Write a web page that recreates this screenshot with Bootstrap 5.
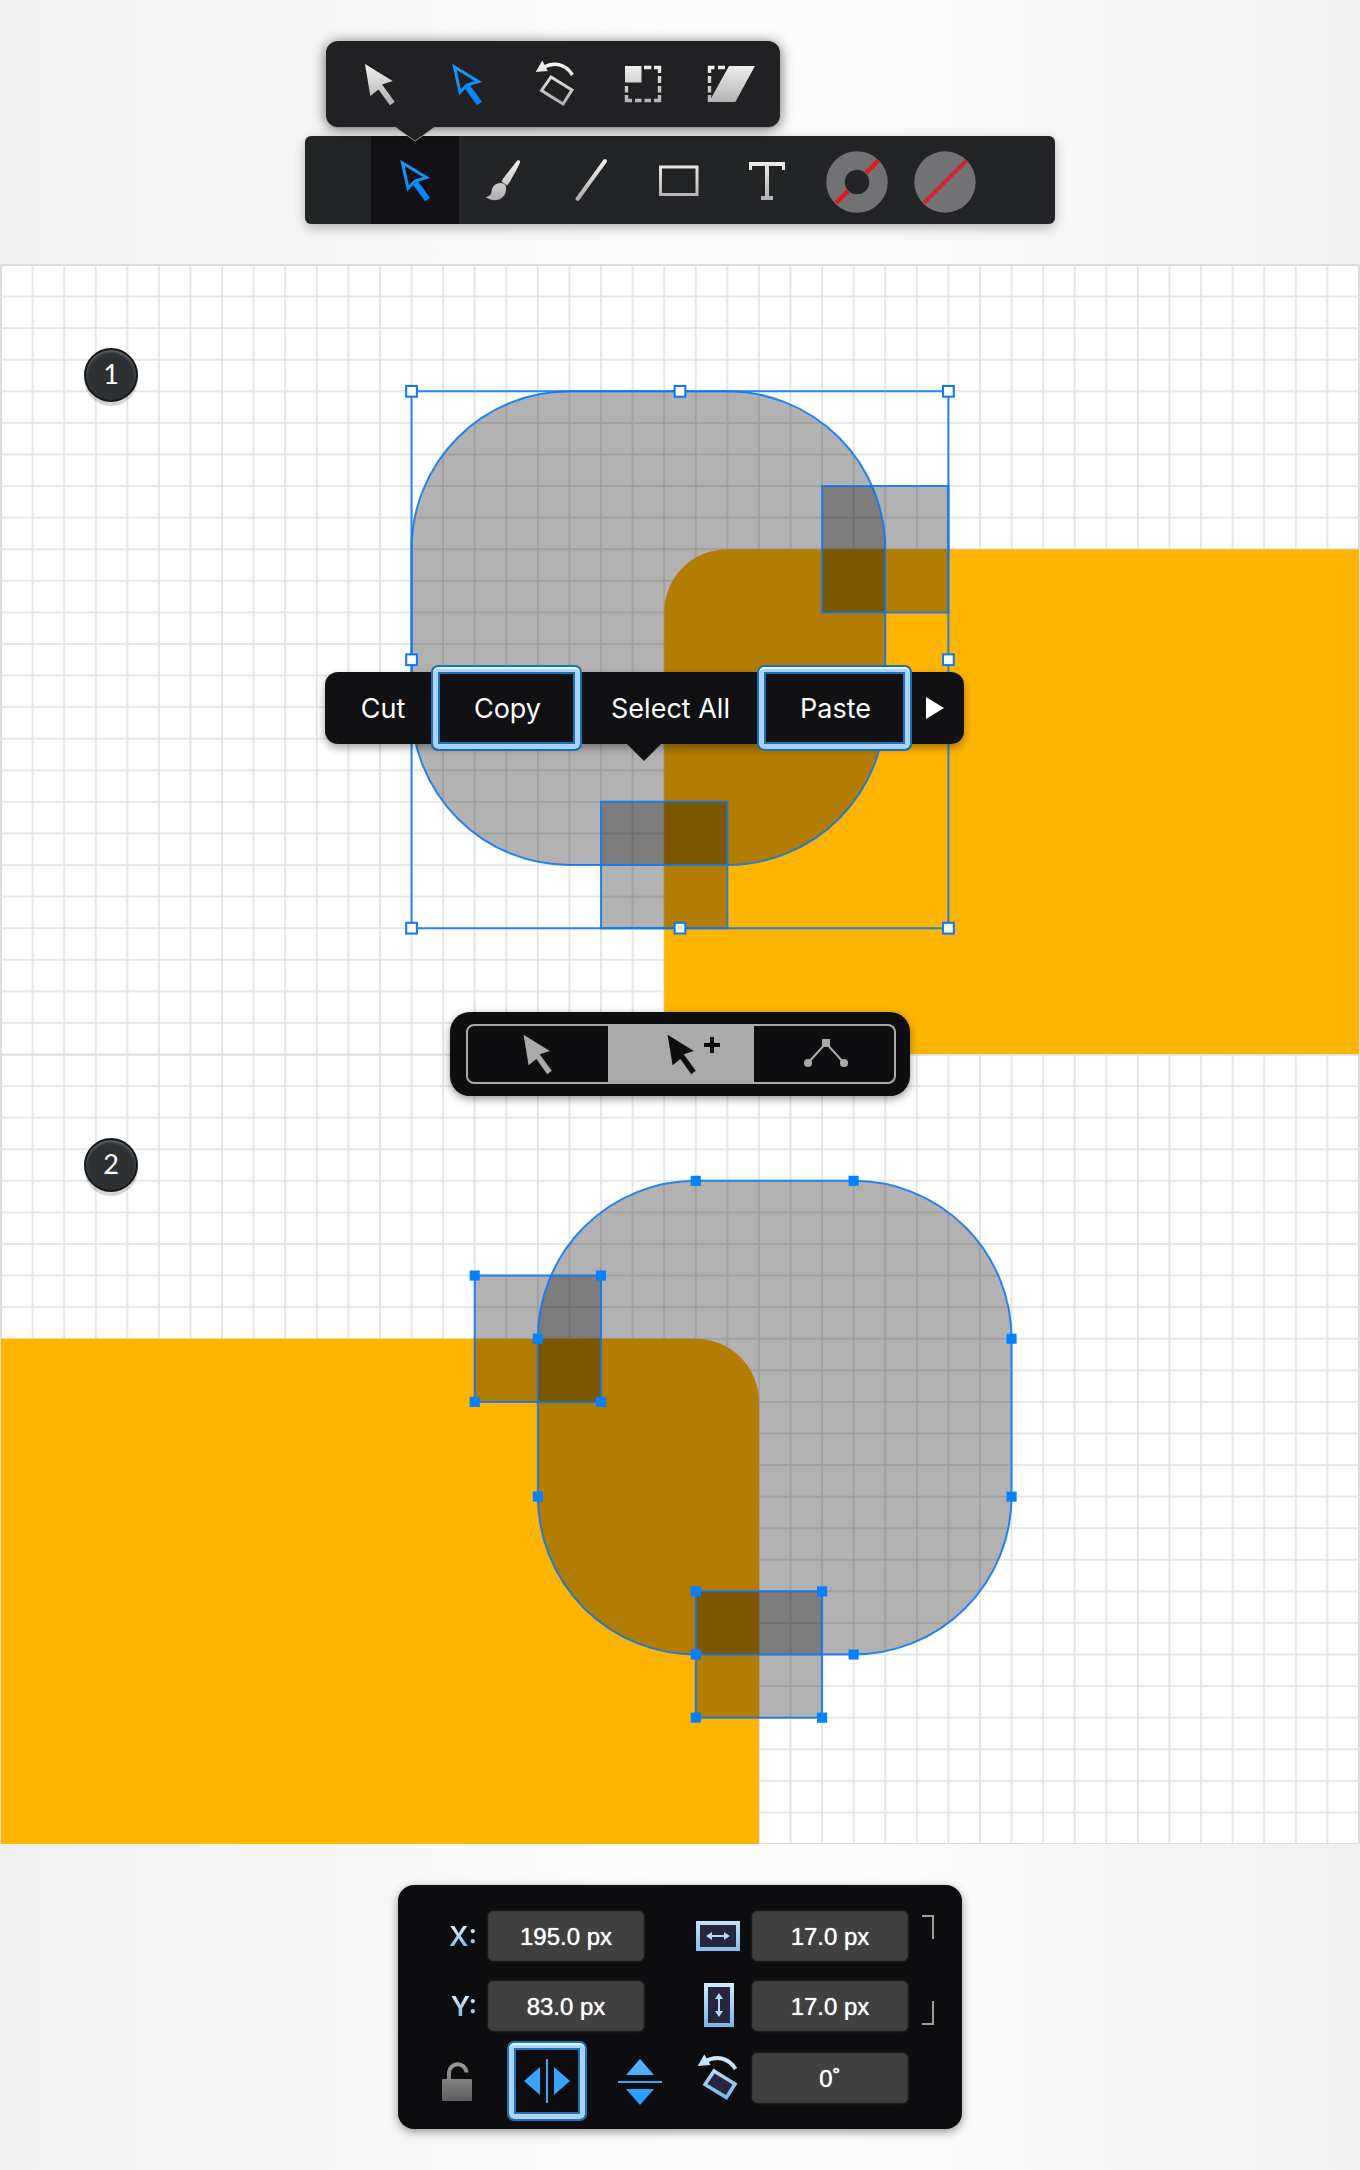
<!DOCTYPE html>
<html lang="en">
<head>
<meta charset="utf-8">
<meta name="viewport" content="width=device-width, initial-scale=1">
<title>Vector editor: copy, paste and flip</title>
<link href="https://cdn.jsdelivr.net/npm/bootstrap@5.3.0/dist/css/bootstrap.min.css" rel="stylesheet">
<style>
  body { background: linear-gradient(90deg, #f0f0f0, #fcfcfc 50%, #fcfcfc 62%, #f0f0f0); font-family: Inter, "Liberation Sans", sans-serif; }
  svg { display: block; }
  button { color: inherit; }
  .tool-zone { padding: 41px 0 40px; }
  .toolbars { width: 750px; }
  .flyout { width: 454px; margin: 0 0 9px 21px; padding-left: 10px; background: #212123; border-radius: 12px; box-shadow: 0 1px 0 #999, 0 2px 14px rgba(0,0,0,.6); z-index: 2; }
  .flyout-tip { left: 68px; top: 85px; }
  .toolbox { padding-left: 66px; background: #222426; border-radius: 6px; box-shadow: 0 4px 12px rgba(0,0,0,.28); }
  .tool { padding: 0; border: 0; background: transparent; width: 88px; height: 86px; }
  .toolbox .tool { height: 88px; }
  .toolbox .tool.active { background: #121214; }
  .artboard { background: #fff; }
  .artboard > svg { width: 100%; height: auto; }
  .edge { vector-effect: non-scaling-stroke; stroke: #0a78f5; stroke-opacity: .88; stroke-width: 2; fill: none; }
  .tint { fill: #000; fill-opacity: .3; }
  .step { left: 84px; top: 84px; width: 54px; height: 54px; background: #2e3134; color: #fff; font: 27px/48px Lato, sans-serif; text-align: center; border: 2px solid #17181a; box-shadow: inset 0 2px 3px #63666a, 0 4px 1px rgba(0,0,0,.17); }
  .edit-menu { left: 50%; top: 408px; height: 72px; width: 639px; margin-left: -355px; background: #111113; color: #fff; border-radius: 13px; box-shadow: 0 4px 9px rgba(0,0,0,.35); font-size: 27px; line-height: 36px; }
  .edit-menu button { padding: 2px 0 0 2px; border: 0; background: transparent; height: 72px; }
  .edit-menu .m-cut { width: 106px; padding-left: 10px; }
  .m-mid { width: 175px; }
  .edit-menu .m-next { width: 52px; padding: 0; }
  .menu-tip { left: 301px; top: 71px; }
  .edit-menu .m-copy { width: 151px; }
  .edit-menu .m-paste { width: 155px; }
  .edit-menu .ringed { height: 86px; }
  .ringed, .edit-menu .ringed { background: #111113; border: 2px solid #1773b4; border-radius: 7px; box-shadow: inset 0 2px 0 #e4f4ff, inset 0 0 0 5px #acd2fc, inset 0 0 0 7px #1773b4; }
  .modes { left: 50%; bottom: -42px; width: 460px; margin-left: -230px; padding: 12px 14px 12px 16px; background: #0e0e10; border-radius: 20px; box-shadow: 0 3px 8px rgba(0,0,0,.4); z-index: 3; }
  .mode-set { height: 60px; border: 2px solid #aaa; border-radius: 8px; overflow: hidden; }
  .mode-set button { padding: 0; border: 0; background: transparent; color: #aaa; width: 140px; }
  .mode-set .active { background: #aaa; color: #0e0e10; width: 146px; }
  .inspector-zone { padding: 41px 0; }
  .inspector { width: 564px; padding: 26px 28px 26px 44px; background: #0d0d0f; border-radius: 16px; box-shadow: 0 3px 10px rgba(0,0,0,.4); }
  .field-label { width: 46px; padding: 2px 11px 0 0; text-align: right; font-weight: 600; font-size: 27px; line-height: 48px; background: linear-gradient(#e0f1ff 25%, #6fb4ea 80%); -webkit-background-clip: text; background-clip: text; color: transparent; }
  .field { width: 156px; height: 50px; padding: 2px 0 0; border: 1px solid #373737; border-radius: 5px; background: #404040; color: #fff; text-align: center; font: 24px "Liberation Sans", Arial, sans-serif; text-shadow: 0 0 1px #fff; box-shadow: 0 0 3px #333; }
  .cell-icon { width: 44px; margin: 0 12px 0 52px; }
  .link-mark { margin-left: 14px; }
  .next-row { margin-top: 20px; }
  .last-row { margin-top: 22px; }
  .flip-set { width: 246px; height: 80px; margin: -12px 0 -18px; }
  .flip-set button { padding: 0; border: 0; background: transparent; }
  .flip-set .ringed { width: 80px; height: 80px; margin: 0 31px 0 35px; border: 2px solid #1773b4; background: #0d0d0f; }
  .flip-set + .cell-icon { margin-left: 8px; }
</style>
<script src="https://cdn.jsdelivr.net/npm/bootstrap@5.3.0/dist/js/bootstrap.bundle.min.js"></script>
</head>
<body>
<svg width="0" height="0" class="position-absolute" aria-hidden="true">
  <defs>
    <linearGradient id="silver" gradientUnits="userSpaceOnUse" x1="0" y1="22" x2="0" y2="64"><stop stop-color="#f4f4f4"/><stop offset="1" stop-color="#aeaeb0"/></linearGradient>
    <linearGradient id="azure" gradientUnits="userSpaceOnUse" x1="0" y1="22" x2="0" y2="64"><stop stop-color="#19a0f5"/><stop offset="1" stop-color="#0580ff"/></linearGradient>
    <linearGradient id="sky" gradientUnits="userSpaceOnUse" x1="0" y1="2" x2="0" y2="46"><stop stop-color="#d6ecff"/><stop offset="1" stop-color="#76b5ea"/></linearGradient>
    <linearGradient id="skyTurn" gradientUnits="userSpaceOnUse" x1="0" y1="20" x2="0" y2="65"><stop stop-color="#d6ecff"/><stop offset="1" stop-color="#76b5ea"/></linearGradient>
    <linearGradient id="flip" gradientUnits="userSpaceOnUse" x1="0" y1="0" x2="0" y2="50"><stop stop-color="#62b6ff"/><stop offset="1" stop-color="#1a98fd"/></linearGradient>
    <linearGradient id="steel" gradientUnits="userSpaceOnUse" x1="0" y1="4" x2="0" y2="46"><stop stop-color="#a0a0a0"/><stop offset="1" stop-color="#5c5c5e"/></linearGradient>
    <path id="arrow" d="M29 23 56.700 40 46 43.500 58.700 60.700 54 64.500 42.500 48.500 34.300 55z"/>
    <g id="hollow-arrow"><path d="M30.500 26 54.500 40.500 43 44 36 51.500z" fill="none" stroke="url(#azure)" stroke-width="3"/><path d="M43.500 46 55.500 62.500" stroke="url(#azure)" stroke-width="6"/></g>
    <pattern id="squares" width="1" height="1" patternUnits="userSpaceOnUse"><path d="M0 0H1V1H0z" fill="none" stroke="#000" stroke-opacity=".12" stroke-width=".05"/></pattern>
    <rect id="node" x="-.16" y="-.16" width=".32" height=".32" fill="#0580ff"/>
    <rect id="handle" x="-.17" y="-.17" width=".34" height=".34" fill="#fff" stroke="#1277f0" stroke-width=".065"/>
  </defs>
</svg>

<header class="tool-zone d-flex justify-content-center">
  <div class="toolbars">
    <div class="flyout d-flex position-relative" role="toolbar" aria-label="Selection tools">
      <button class="tool" aria-label="Select"><svg width="88" height="86" fill="url(#silver)"><use href="#arrow"/></svg></button>
      <button class="tool" aria-label="Direct select"><svg width="88" height="86"><use href="#hollow-arrow"/></svg></button>
      <button class="tool" aria-label="Rotate"><svg width="88" height="86"><path d="M23.700 31 30.300 19.500 35.700 30z" fill="url(#silver)"/><path d="M31 26.500C42 21 53 22 60.500 34" fill="none" stroke="url(#silver)" stroke-width="3.500"/><path d="M39 36 60 49 51 63 29.500 49.500z" fill="none" stroke="url(#silver)" stroke-width="3"/></svg></button>
      <button class="tool" aria-label="Scale"><svg width="88" height="86"><path d="M25 25h16.500v16.500H25z" fill="url(#silver)"/><path d="M44 26.500h7.300M54 26.500h5.500V32M59.500 35v7M59.500 45v6.500M59.500 54v5.500H54M51 59.500h-6.500M41.500 59.500H35M32 59.500h-5.500V54M26.500 51.500V45" fill="none" stroke="url(#silver)" stroke-width="3.400"/></svg></button>
      <button class="tool" aria-label="Shear"><svg width="88" height="86"><path d="M41 25h26L47.300 61H21z" fill="url(#silver)"/><path d="M37 26.500h-7M26.500 26.500h-5V32M21.500 35v7M21.500 45v6.500M21.500 54v7" fill="none" stroke="url(#silver)" stroke-width="3.400"/></svg></button>
      <svg class="flyout-tip position-absolute" width="42" height="17"><path d="M1 0v1L21 15 41 1V0z" fill="#212123"/><path d="M1 1 21 15 41 1" fill="none" stroke="#999"/></svg>
    </div>
    <div class="toolbox d-flex" role="toolbar" aria-label="Tools">
      <button class="tool active" aria-label="Direct select"><svg width="88" height="88"><use href="#hollow-arrow" x="1" y="1"/></svg></button>
      <button class="tool" aria-label="Brush"><svg width="88" height="88" fill="url(#silver)"><path d="M57.500 25.500c1-2 4-1.500 3.500 1L58.500 32 50.500 46.500 48 49.500l-5.500-4 2-3.500z"/><path d="M47 50.500c.5 4.500-.5 9-5 12-5 3-12 1.500-15.500-1.500 3.500-.5 5.500-1.500 6-5.500.5-5 4-8.500 9-8.500 3 0 5 1.500 5.500 3.500z"/></svg></button>
      <button class="tool" aria-label="Line"><svg width="88" height="88"><path d="M58 25 30.500 63" fill="none" stroke="url(#silver)" stroke-width="4" stroke-linecap="round"/></svg></button>
      <button class="tool" aria-label="Rectangle"><svg width="88" height="88"><rect x="25.500" y="31" width="36.500" height="27.500" fill="none" stroke="url(#silver)" stroke-width="3"/></svg></button>
      <button class="tool" aria-label="Text"><svg width="88" height="88" fill="none" stroke="url(#silver)" stroke-width="4"><path d="M26 28h36M44 28v34M38 62h12"/><path d="M27.500 26v8M60.500 26v8" stroke-width="3"/></svg></button>
      <button class="tool" aria-label="Stroke: none"><svg width="88" height="88"><circle cx="46" cy="46" r="21.500" fill="none" stroke="#727274" stroke-width="18.500"/><path d="M67.500 24.500 55 37M37 55 25 67" stroke="#e21a1c" stroke-width="4.500"/></svg></button>
      <button class="tool" aria-label="Fill: none"><svg width="88" height="88"><circle cx="46" cy="46" r="30.700" fill="#727274"/><path d="M67.500 24.500 25 67" stroke="#c8282e" stroke-width="4"/></svg></button>
    </div>
  </div>
</header>

<main>
  <section class="artboard position-relative">
    <svg viewBox="0 0 1360 790" role="img" aria-label="Artwork selected with a bounding box">
      <g transform="translate(1 1) scale(31.580)">
        <rect width="43" height="25" fill="url(#squares)"/>
        <path d="M0 25V0H43V25" fill="none" stroke="#dcdcdc" stroke-width=".06"/>
        <path d="M21 25V11A2 2 0 0 1 23 9H43V25z" fill="#ffb400"/>
        <rect class="tint" x="13" y="4" width="15" height="15" rx="5"/>
        <path class="tint" d="M26 7h4v4h-4z"/><path class="tint" d="M19 17h4v4h-4z"/>
        <rect class="edge" x="13" y="4" width="15" height="15" rx="5"/>
        <path class="edge" d="M26 7h4v4h-4zM19 17h4v4h-4z"/>
        <path class="edge" d="M13 4h17v17H13z"/>
        <use href="#handle" x="13" y="4"/><use href="#handle" x="21.500" y="4"/><use href="#handle" x="30" y="4"/>
        <use href="#handle" x="13" y="12.500"/><use href="#handle" x="30" y="12.500"/>
        <use href="#handle" x="13" y="21"/><use href="#handle" x="21.500" y="21"/><use href="#handle" x="30" y="21"/>
      </g>
    </svg>
    <span class="step position-absolute rounded-circle">1</span>
    <div class="edit-menu position-absolute d-flex align-items-center" role="menu">
      <svg class="menu-tip position-absolute" width="36" height="19"><path d="M0 0h36L18 18z" fill="#111113"/></svg>
      <button class="m-cut" role="menuitem">Cut</button>
      <button class="m-copy ringed" role="menuitem">Copy</button>
      <button class="m-mid" role="menuitem">Select All</button>
      <button class="m-paste ringed" role="menuitem">Paste</button>
      <button class="m-next" role="menuitem" aria-label="More"><svg width="52" height="72"><path d="M14 25v22l18-11z" fill="#fff"/></svg></button>
    </div>
    <div class="modes position-absolute">
      <div class="mode-set d-flex" role="group" aria-label="Selection mode">
        <button aria-label="Replace selection"><svg width="140" height="56" fill="currentColor"><use href="#arrow" transform="translate(28 -13) scale(.95)"/></svg></button>
        <button class="active" aria-label="Add to selection"><svg width="146" height="56" fill="currentColor"><use href="#arrow" transform="translate(32 -13) scale(.95)"/><path d="M102 11h4v6h6v4h-6v6h-4v-6h-6v-4h6z"/></svg></button>
        <button aria-label="Edit nodes"><svg width="140" height="56" fill="currentColor"><path d="M54 37 72 17 90 37" fill="none" stroke="currentColor" stroke-width="2"/><path d="M68 13h8v8h-8z"/><circle cx="54" cy="37" r="4"/><circle cx="90" cy="37" r="4"/></svg></button>
      </div>
    </div>
  </section>

  <section class="artboard position-relative">
    <svg viewBox="0 0 1360 790" role="img" aria-label="Flipped artwork with its nodes selected">
      <g transform="translate(1 .5) scale(31.580)">
        <rect width="43" height="25" fill="url(#squares)"/>
        <path d="M0 0H43V25H0z" fill="none" stroke="#dcdcdc" stroke-width=".06"/>
        <path d="M0 9H22A2 2 0 0 1 24 11V25H0z" fill="#ffb400"/>
        <rect class="tint" x="17" y="4" width="15" height="15" rx="5"/>
        <path class="tint" d="M15 7h4v4h-4z"/><path class="tint" d="M22 17h4v4h-4z"/>
        <rect class="edge" x="17" y="4" width="15" height="15" rx="5"/>
        <path class="edge" d="M15 7h4v4h-4zM22 17h4v4h-4z"/>
        <use href="#node" x="22" y="4"/><use href="#node" x="27" y="4"/><use href="#node" x="32" y="9"/><use href="#node" x="32" y="14"/>
        <use href="#node" x="27" y="19"/><use href="#node" x="22" y="19"/><use href="#node" x="17" y="14"/><use href="#node" x="17" y="9"/>
        <use href="#node" x="15" y="7"/><use href="#node" x="19" y="7"/><use href="#node" x="19" y="11"/><use href="#node" x="15" y="11"/>
        <use href="#node" x="22" y="17"/><use href="#node" x="26" y="17"/><use href="#node" x="26" y="21"/><use href="#node" x="22" y="21"/>
      </g>
    </svg>
    <span class="step position-absolute rounded-circle">2</span>
  </section>
</main>

<footer class="inspector-zone d-flex justify-content-center">
  <form class="inspector">
    <div class="d-flex">
      <label class="field-label" for="pos-x">X:</label>
      <input class="field" id="pos-x" value="195.0 px">
      <label class="cell-icon" for="size-w" aria-label="Width"><svg width="44" height="50"><rect x="2" y="12" width="40" height="26" fill="#26263e" stroke="url(#sky)" stroke-width="4"/><path d="M10 25l6-4v3h12v-3l6 4-6 4v-3H16v3z" fill="#b4dafa"/></svg></label>
      <input class="field" id="size-w" value="17.0 px">
      <svg class="link-mark" width="12" height="50"><path d="M0 5h11v23" fill="none" stroke="#9c9c9c" stroke-width="2"/></svg>
    </div>
    <div class="next-row d-flex">
      <label class="field-label" for="pos-y">Y:</label>
      <input class="field" id="pos-y" value="83.0 px">
      <label class="cell-icon" for="size-h" aria-label="Height"><svg width="44" height="50"><rect x="10" y="4" width="26" height="40" fill="#26263e" stroke="url(#sky)" stroke-width="4"/><path d="M23 12l4 6h-3v12h3l-4 6-4-6h3V18h-3z" fill="#b4dafa"/></svg></label>
      <input class="field" id="size-h" value="17.0 px">
      <svg class="link-mark" width="12" height="50"><path d="M11 20v23H0" fill="none" stroke="#9c9c9c" stroke-width="2"/></svg>
    </div>
    <div class="last-row d-flex">
      <div class="flip-set d-flex align-items-center">
        <button type="button" aria-label="Lock proportions"><svg width="30" height="50"><path d="M7 25V16a8.800 8.800 0 0 1 17.500 0v.500" fill="none" stroke="url(#steel)" stroke-width="4"/><rect y="23" width="30" height="22" rx="1" fill="url(#steel)"/></svg></button>
        <button type="button" class="ringed" aria-label="Flip horizontally"><svg width="76" height="76" viewBox="2 2 76 76" fill="#38a4ff"><path d="M17 40 33 26v28zM63 40 47 26v28zM39 18h2v44h-2z"/></svg></button>
        <button type="button" aria-label="Flip vertically"><svg width="44" height="50" fill="url(#flip)"><path d="M22 3 36 19H8zM22 49 36 33H8zM0 25h44v2H0z"/></svg></button>
      </div>
      <label class="cell-icon" for="angle" aria-label="Rotation"><svg width="44" height="50"><g transform="translate(-22 -18)"><path d="M23.700 31 30.300 19.500 36.500 30z" fill="url(#skyTurn)"/><path d="M31 26.500C42 20.500 54 22 61.500 34" fill="none" stroke="url(#skyTurn)" stroke-width="4"/><path d="M40 36 61 49 52.500 62.500 31 49.500z" fill="#26263e" stroke="url(#skyTurn)" stroke-width="3.500"/></g></svg></label>
      <input class="field" id="angle" value="0˚">
    </div>
  </form>
</footer>
</body>
</html>
